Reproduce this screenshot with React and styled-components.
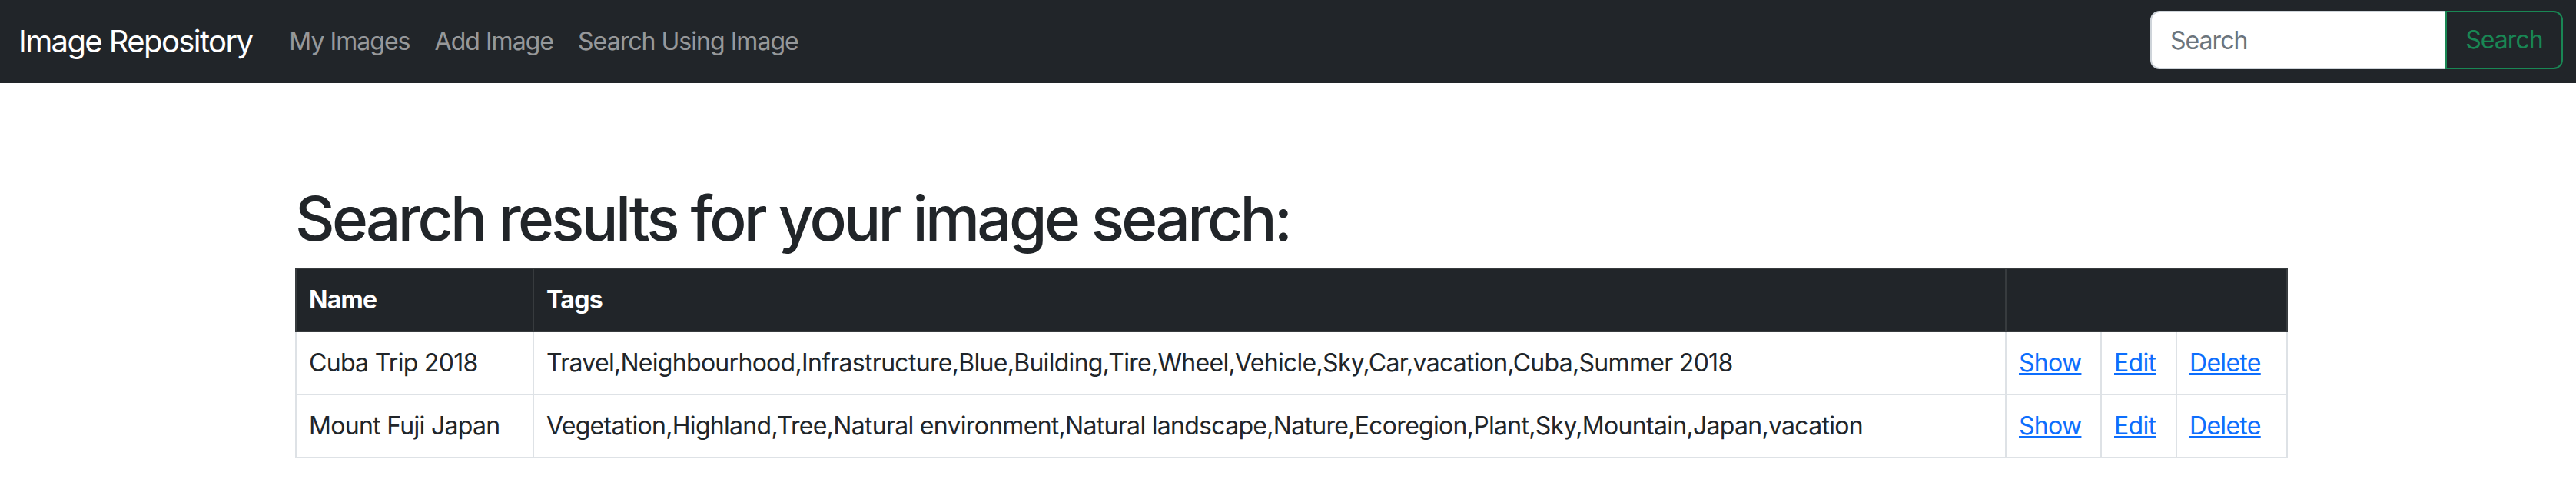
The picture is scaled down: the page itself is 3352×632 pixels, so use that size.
import React from 'react';
import styled, { createGlobalStyle } from 'styled-components';

const GlobalStyle = createGlobalStyle`
  html, body {
    margin: 0;
    padding: 0;
    background: #fff;
  }
  body {
    font-family: Inter, 'Liberation Sans', sans-serif;
    color: #212529;
    font-size: 32px;
    line-height: 1.5;
    letter-spacing: -0.022em;
  }
  * {
    box-sizing: border-box;
  }
`;

const Navbar = styled.nav`
  height: 108px;
  background-color: #212529;
  display: flex;
  align-items: center;
  padding: 0 17px 0 24px;
`;

const Brand = styled.a`
  color: #fff;
  font-size: 40px;
  line-height: 60px;
  letter-spacing: -0.04em;
  margin-right: 32px;
  text-decoration: none;
  white-space: nowrap;
`;

const NavList = styled.div`
  display: flex;
  align-items: center;
  flex: 1;
`;

const NavLink = styled.a`
  color: rgba(255, 255, 255, 0.55);
  font-size: 32px;
  line-height: 48px;
  letter-spacing: -0.03em;
  padding: 16px;
  text-decoration: none;
  white-space: nowrap;
`;

const SearchForm = styled.form`
  display: flex;
  align-items: stretch;
  margin-top: -4px;
`;

const SearchInput = styled.input`
  width: 384px;
  height: 76px;
  padding: 12px 24px;
  font-family: inherit;
  font-size: 32px;
  line-height: 48px;
  letter-spacing: -0.03em;
  color: #212529;
  background: #fff;
  border: 2px solid #ced4da;
  border-right: none;
  border-radius: 12px 0 0 12px;
  outline: none;

  &::placeholder {
    color: #6c757d;
  }
`;

const SearchButton = styled.button`
  width: 153px;
  height: 76px;
  padding: 12px 0;
  font-family: inherit;
  font-size: 32px;
  line-height: 48px;
  letter-spacing: -0.03em;
  color: #198754;
  background: transparent;
  border: 2px solid #198754;
  border-radius: 0 12px 12px 0;
`;

const Container = styled.main`
  width: 2591px;
  margin: 0 0 0 384px;
  padding-top: 128px;
`;

const Heading = styled.h1`
  font-size: 80px;
  font-weight: 500;
  line-height: 1.2;
  letter-spacing: -0.046em;
  margin: 0 0 16px;
`;

const Table = styled.table`
  width: 100%;
  table-layout: fixed;
  border-collapse: collapse;
  border: 2px solid #dee2e6;
`;

const HeadCell = styled.th`
  background-color: #212529;
  color: #fff;
  font-weight: 700;
  text-align: left;
  padding: 16px;
  border: 2px solid #373b3e;
  line-height: 48px;
`;

const Cell = styled.td`
  padding: 16px;
  border: 2px solid #dee2e6;
  line-height: 48px;
  white-space: nowrap;
`;

const ActionLink = styled.a`
  color: #0d6efd;
  text-decoration: underline;
`;

const results = [
  {
    name: 'Cuba Trip 2018',
    tags: 'Travel,Neighbourhood,Infrastructure,Blue,Building,Tire,Wheel,Vehicle,Sky,Car,vacation,Cuba,Summer 2018',
  },
  {
    name: 'Mount Fuji Japan',
    tags: 'Vegetation,Highland,Tree,Natural environment,Natural landscape,Nature,Ecoregion,Plant,Sky,Mountain,Japan,vacation',
  },
];

const App = () => (
  <>
    <GlobalStyle />
    <Navbar>
      <Brand href="#">Image Repository</Brand>
      <NavList>
        <NavLink href="#">My Images</NavLink>
        <NavLink href="#">Add Image</NavLink>
        <NavLink href="#">Search Using Image</NavLink>
      </NavList>
      <SearchForm onSubmit={(e) => e.preventDefault()}>
        <SearchInput type="search" placeholder="Search" />
        <SearchButton type="submit">Search</SearchButton>
      </SearchForm>
    </Navbar>
    <Container>
      <Heading>Search results for your image search:</Heading>
      <Table>
        <colgroup>
          <col style={{ width: 309 }} />
          <col style={{ width: 1916 }} />
          <col style={{ width: 124 }} />
          <col style={{ width: 98 }} />
          <col style={{ width: 144 }} />
        </colgroup>
        <thead>
          <tr>
            <HeadCell>Name</HeadCell>
            <HeadCell>Tags</HeadCell>
            <HeadCell colSpan={3} />
          </tr>
        </thead>
        <tbody>
          {results.map((r) => (
            <tr key={r.name}>
              <Cell>{r.name}</Cell>
              <Cell>{r.tags}</Cell>
              <Cell><ActionLink href="#">Show</ActionLink></Cell>
              <Cell><ActionLink href="#">Edit</ActionLink></Cell>
              <Cell><ActionLink href="#">Delete</ActionLink></Cell>
            </tr>
          ))}
        </tbody>
      </Table>
    </Container>
  </>
);

export default App;
